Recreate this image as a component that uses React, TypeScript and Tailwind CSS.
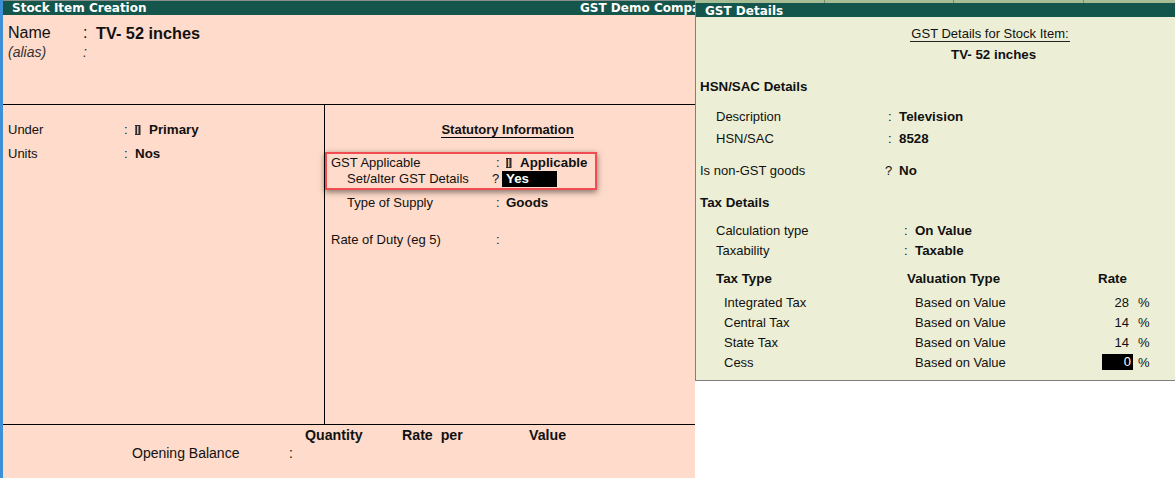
import React from "react";

const Bar = () => (
  <svg width="6" height="10" viewBox="0 0 6 10" className="shrink-0">
    <rect x="0" y="0" width="5.5" height="10" fill="#2f2a30" />
    <rect x="2" y="1" width="1.5" height="8" fill="#d9c4b0" />
    <rect x="0" y="1" width="1" height="8" fill="#8a5a40" />
  </svg>
);

function Row({ h, label, labelW, colonW, children, className = "", colon = ":" }: { h: number; label: React.ReactNode; labelW: number; colonW: number; children?: React.ReactNode; className?: string; colon?: string }) {
  return (
    <div className={`flex items-center ${className}`} style={{ height: h }}>
      <div className="shrink-0 whitespace-nowrap" style={{ width: labelW }}>{label}</div>
      <div className="shrink-0" style={{ width: colonW }}>{colon}</div>
      {children}
    </div>
  );
}

const taxRows = [
  ["Integrated Tax", "28"],
  ["Central Tax", "14"],
  ["State Tax", "14"],
  ["Cess", "0"],
];

export default function App() {
  return (
    <div className="flex h-[478px] w-[1175px] overflow-hidden bg-white text-[13px] text-[#111] font-['Liberation_Sans',Arial,sans-serif]">
      {/* Left panel */}
      <div className="flex h-full w-[695px] shrink-0 flex-col border-l-[3px] border-[#3f8fd6] bg-[#fedbca]">
        <div className="flex h-[15px] shrink-0 items-center border-t border-[#8a8f8c] bg-[#14564b] pl-[9px] font-['DejaVu_Sans',sans-serif] text-[12px] font-bold text-white">
          <span className="w-[568px] shrink-0">Stock Item Creation</span>
          <span className="shrink-0 whitespace-nowrap">GST Demo Compa</span>
        </div>
        <div className="h-[90px] shrink-0 border-b border-black pl-[5px] pt-[9px]">
          <div className="flex h-[18px] items-center text-[16px]">
            <span className="w-[75px]">Name</span>
            <span className="w-[13px]">:</span>
            <span className="text-[16.3px] font-bold">TV- 52 inches</span>
          </div>
          <div className="mt-[2px] flex h-[16px] items-center text-[14px] italic text-[#333]">
            <span className="w-[75px]">(alias)</span>
            <span>:</span>
          </div>
        </div>
        <div className="flex min-h-0 flex-1">
          <div className="w-[322px] shrink-0 border-r border-black pl-[5px] pt-[17px]">
            <Row h={16} label="Under" labelW={116} colonW={11}>
              <Bar />
              <span className="ml-[8px] text-[13.33px] font-bold">Primary</span>
            </Row>
            <Row h={16} label="Units" labelW={116} colonW={11} className="mt-[8px]">
              <span className="text-[13.33px] font-bold">Nos</span>
            </Row>
          </div>
          <div className="min-w-0 flex-1 pt-[17px]">
            <div className="ml-[116px] h-[16px] w-[133px] whitespace-nowrap border-b border-black text-center font-bold leading-[15px]">Statutory Information</div>
            <div className="mt-[14px] w-[272px] border-2 border-[#f04c52] pb-[1px] pl-[4px] pt-[1px] shadow-[0_2px_6px_rgba(0,0,0,0.5)]">
              <Row h={16} label="GST Applicable" labelW={165} colonW={10}>
                <Bar />
                <span className="ml-[8px] text-[13.33px] font-bold">Applicable</span>
              </Row>
              <Row h={16} label={<span className="ml-[16px]">Set/alter GST Details</span>} labelW={161} colonW={10} colon="?">
                <span className="flex h-[16px] w-[55px] items-center bg-black pl-[4px] text-[13.33px] font-bold text-white">Yes</span>
              </Row>
            </div>
            <div className="pl-[6px]">
              <Row h={16} label={<span className="ml-[16px]">Type of Supply</span>} labelW={165} colonW={10} className="mt-[5px]">
                <span className="text-[13.33px] font-bold">Goods</span>
              </Row>
              <Row h={16} label="Rate of Duty (eg 5)" labelW={165} colonW={10} className="mt-[21px]" />
            </div>
          </div>
        </div>
        <div className="h-[54px] shrink-0 border-t border-black text-[14.2px]">
          <div className="flex h-[20px] items-center pt-[2px] font-bold">
            <span className="ml-[302px] w-[97px]">Quantity</span>
            <span className="w-[127px] whitespace-pre">Rate  per</span>
            <span>Value</span>
          </div>
          <div className="flex h-[17px] items-center text-[14px]">
            <span className="ml-[129px] w-[157px]">Opening Balance</span>
            <span>:</span>
          </div>
        </div>
      </div>
      {/* Right panel */}
      <div className="flex h-full min-w-0 flex-1 flex-col">
        <div className="flex h-[3px] shrink-0 bg-[#a7bd95] pl-[129px]">
          <div className="h-full w-px bg-[#7a8a72]" />
          <div className="ml-[128px] h-full w-px bg-[#7a8a72]" />
          <div className="ml-[129px] h-full w-px bg-[#7a8a72]" />
        </div>
        <div className="h-[378px] shrink-0 border-b border-l border-[#7f7f7f] bg-[#ecefd6]">
          <div className="flex h-[14px] items-center bg-[#14564b] pl-[9px] pt-[1px] font-['DejaVu_Sans',sans-serif] text-[12px] font-bold text-white">GST Details</div>
          <div className="pl-px">
            <div className="ml-[213px] mt-[10px] h-[15px] w-[160px] whitespace-nowrap border-b border-[#222] text-center leading-[14px]">GST Details for Stock Item:</div>
            <div className="ml-[254px] mt-[5px] whitespace-nowrap text-[13.33px] font-bold leading-[16px]">TV- 52 inches</div>
            <div className="mt-[16px] h-[16px] pl-[3px] text-[13.33px] font-bold leading-[16px]">HSN/SAC Details</div>
            <div className="mt-[14px] pl-[19px]">
              <Row h={16} label="Description" labelW={172} colonW={11}>
                <span className="text-[13.33px] font-bold">Television</span>
              </Row>
              <Row h={16} label="HSN/SAC" labelW={172} colonW={11} className="mt-[6px]">
                <span className="text-[13.33px] font-bold">8528</span>
              </Row>
            </div>
            <div className="pl-[3px]">
              <Row h={16} label="Is non-GST goods" labelW={185} colonW={14} colon="?" className="mt-[16px]">
                <span className="text-[13.33px] font-bold">No</span>
              </Row>
              <div className="mt-[16px] h-[16px] text-[13.33px] font-bold leading-[16px]">Tax Details</div>
            </div>
            <div className="mt-[12px] pl-[19px]">
              <Row h={16} label="Calculation type" labelW={188} colonW={11}>
                <span className="text-[13.33px] font-bold">On Value</span>
              </Row>
              <Row h={16} label="Taxability" labelW={188} colonW={11} className="mt-[4px]">
                <span className="text-[13.33px] font-bold">Taxable</span>
              </Row>
            </div>
            <div className="mt-[12px] flex h-[16px] items-center pl-[19px] text-[13.33px] font-bold">
              <span className="w-[191px]">Tax Type</span>
              <span className="w-[191px]">Valuation Type</span>
              <span>Rate</span>
            </div>
            <div className="mt-[8px] flex flex-col gap-[4px]">
              {taxRows.map(([name, rate], i) => (
                <div key={name} className="flex h-[16px] items-center pl-[27px]">
                  <span className="w-[191px]">{name}</span>
                  <span className="w-[187px]">Based on Value</span>
                  {i === 3 ? (
                    <span className="flex h-[16px] w-[31px] -translate-y-px items-center justify-end bg-black pr-[2px] text-white">{rate}</span>
                  ) : (
                    <span className="w-[31px] pr-[4px] text-right">{rate}</span>
                  )}
                  <span className="ml-[5px]">%</span>
                </div>
              ))}
            </div>
          </div>
        </div>
      </div>
    </div>
  );
}
